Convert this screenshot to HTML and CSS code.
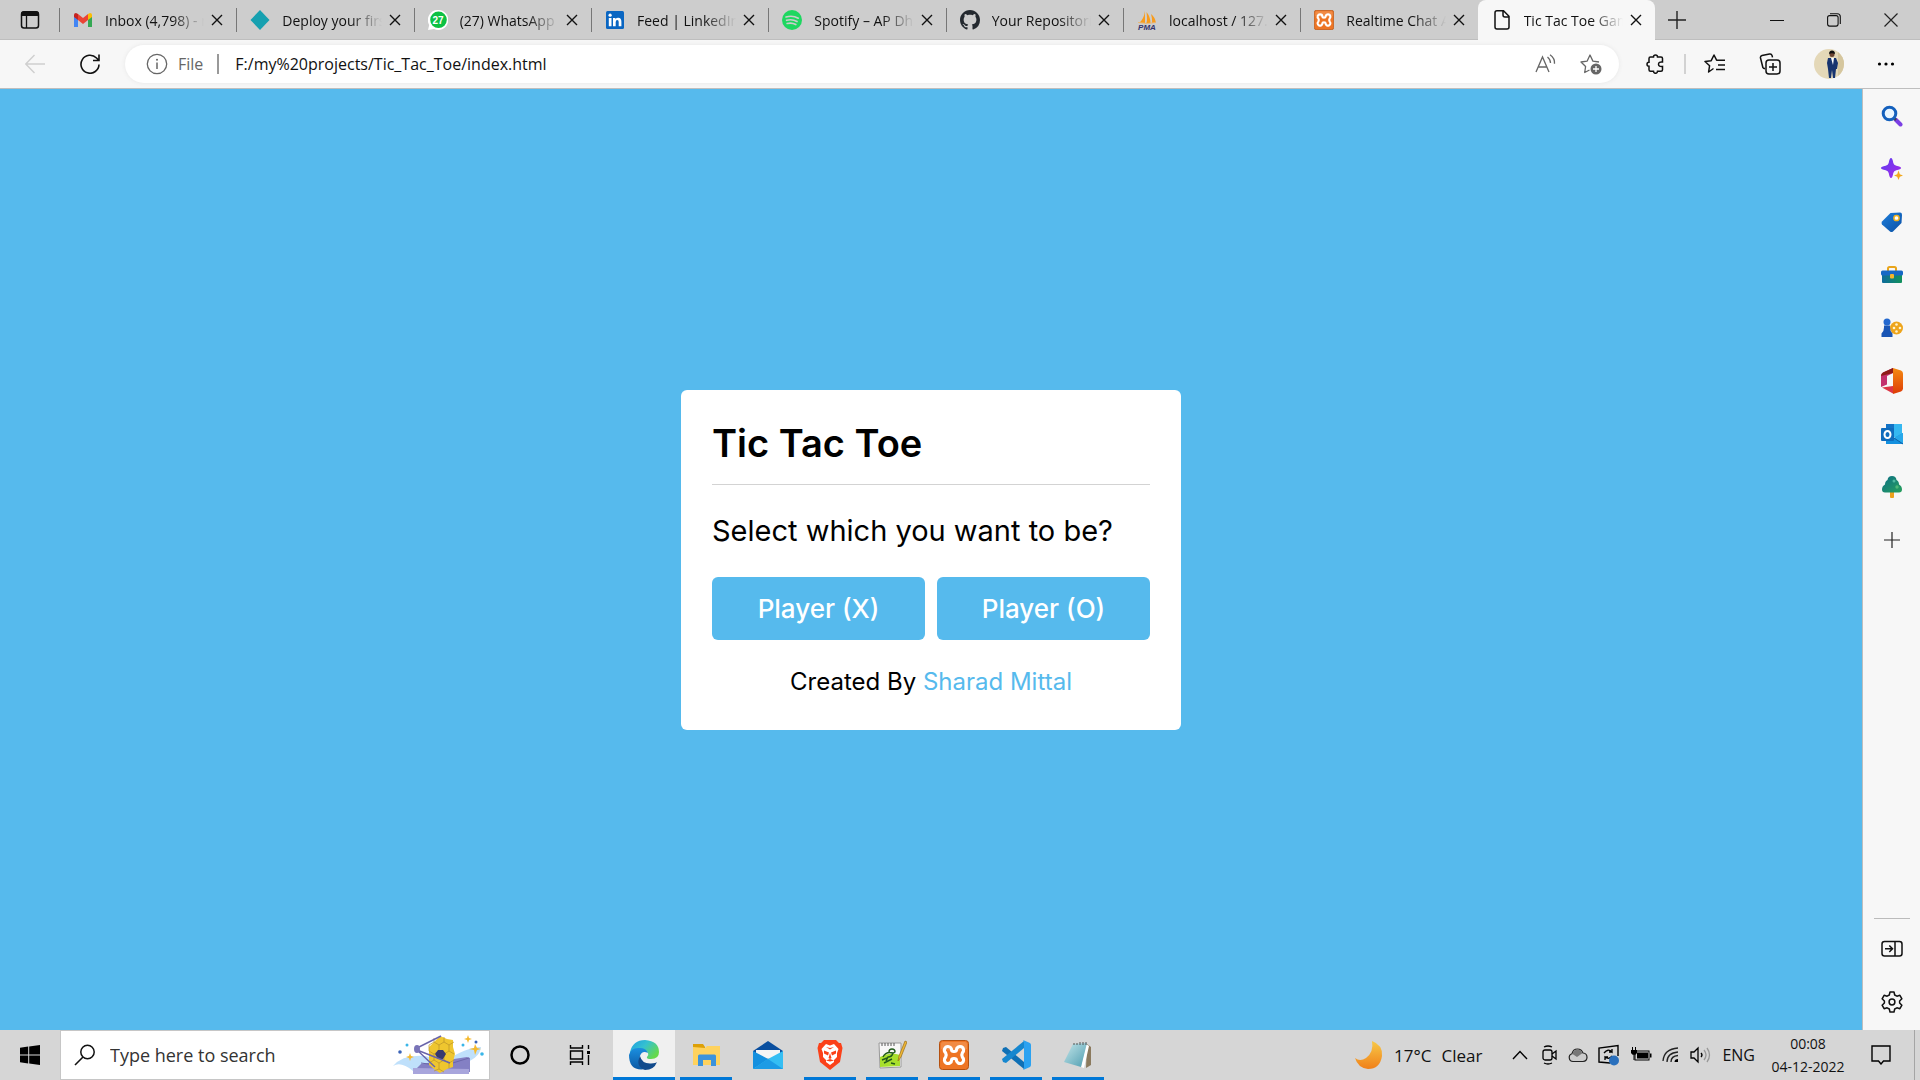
FILE: index.html
```html
<!DOCTYPE html>
<html lang="en">
<head>
<meta charset="utf-8">
<title>Tic Tac Toe Game</title>
<link rel="stylesheet" href="styles.css">
</head>
<body>
<svg class="defs" aria-hidden="true">
  <defs>
    <symbol id="x" viewBox="0 0 12 12"><path d="M1 1l10 10M11 1L1 11" stroke="#111" stroke-width="1.4" fill="none"/></symbol>
    <symbol id="xampp" viewBox="0 0 30 30">
      <rect x=".5" y=".5" width="29" height="29" rx="3" fill="#ee7524" stroke="#b4500f"/>
      <path d="M2 9V4q0-2 2-2h22q2 0 2 2v5q-13 4-26 0z" fill="#f39a5b" opacity=".6"/>
      <path d="M9 6.500a3.600 3.600 0 0 1 3.600 3.600q0 1.400 2.400 1.400t2.400-1.400a3.600 3.600 0 1 1 6 2.700q-1.200 2.200 0 4.400a3.600 3.600 0 1 1-6 2.700q0-1.400-2.400-1.400t-2.400 1.400a3.600 3.600 0 1 1-6-2.700q1.200-2.200 0-4.400A3.600 3.600 0 0 1 9 6.500z" fill="none" stroke="#fff" stroke-width="3.200"/>
    </symbol>
    <linearGradient id="gEdgeA" x1="0" y1="0" x2="1" y2=".6"><stop offset="0" stop-color="#1b9de2"/><stop offset=".5" stop-color="#35c1d0"/><stop offset="1" stop-color="#66d94b"/></linearGradient>
    <linearGradient id="gEdgeB" x1="0" y1="0" x2="0" y2="1"><stop offset="0" stop-color="#1b8fe0"/><stop offset="1" stop-color="#0c59a4"/></linearGradient>
    <linearGradient id="gMoon" x1="0" y1="0" x2="0" y2="1"><stop offset="0" stop-color="#f7c948"/><stop offset="1" stop-color="#f08019"/></linearGradient>
    <linearGradient id="gTag" x1="0" y1="0" x2="1" y2="1"><stop offset="0" stop-color="#1d7fdc"/><stop offset="1" stop-color="#0b4fa3"/></linearGradient>
    <linearGradient id="gSpark" x1="0" y1="0" x2="1" y2="1"><stop offset="0" stop-color="#5b3df0"/><stop offset="1" stop-color="#a82be8"/></linearGradient>
    <linearGradient id="gBox" x1="0" y1="0" x2="1" y2="0"><stop offset="0" stop-color="#0e6b9c"/><stop offset="1" stop-color="#12925c"/></linearGradient>
    <linearGradient id="gOffice" x1="0" y1="0" x2="0" y2="1"><stop offset="0" stop-color="#f58b12"/><stop offset="1" stop-color="#dd3b06"/></linearGradient>
    <linearGradient id="gTree" x1="0" y1="0" x2="1" y2="1"><stop offset="0" stop-color="#0c6f86"/><stop offset="1" stop-color="#28a05c"/></linearGradient>
    <linearGradient id="gNote" x1="0" y1="0" x2="1" y2="1"><stop offset="0" stop-color="#c5e6ea"/><stop offset="1" stop-color="#4e9db0"/></linearGradient>
  </defs>
</svg>

<header class="browser">
  <div class="tabbar">
    <button class="tab-actions" aria-label="Tab actions"><svg width="20" height="20" viewBox="0 0 20 20"><rect x="1.500" y="2" width="17" height="16" rx="2.500" fill="none" stroke="#111" stroke-width="1.500"/><path d="M1 6V4q0-3 3-3h12q3 0 3 3v2z" fill="#111"/><path d="M6.500 6v12" stroke="#111" stroke-width="1.300"/></svg></button>
    <nav class="tabs" aria-label="Open tabs">
      <div class="tab">
        <svg width="20" height="20" viewBox="0 0 20 20"><path d="M1 5v12h4V8z" fill="#4285f4"/><path d="M19 5v12h-4V8z" fill="#34a853"/><path d="M1 5q0-2 2-2l2 1v6L1 7z" fill="#c5221f"/><path d="M19 5q0-2-2-2l-2 1v6l4-3z" fill="#fbbc04"/><path d="M5 4l5 4 5-4v6l-5 4-5-4z" fill="#ea4335"/></svg>
        <a href="#">Inbox (4,798) - mail</a><button aria-label="Close tab"><svg width="12" height="12"><use href="#x"/></svg></button>
      </div>
      <div class="tab">
        <svg width="20" height="20" viewBox="0 0 20 20"><path d="M10 0l9.500 10L10 20 .5 10z" fill="#16a0b0"/></svg>
        <a href="#">Deploy your first</a><button aria-label="Close tab"><svg width="12" height="12"><use href="#x"/></svg></button>
      </div>
      <div class="tab">
        <svg width="20" height="20" viewBox="0 0 20 20"><path d="M10 0a10 10 0 1 1-4 19L0 20l1.200-5A10 10 0 0 1 10 0z" fill="#fff"/><circle cx="10.500" cy="9.800" r="8.300" fill="#0cc143"/><text x="10" y="14" text-anchor="middle" class="wa">27</text></svg>
        <a href="#">(27) WhatsApp</a><button aria-label="Close tab"><svg width="12" height="12"><use href="#x"/></svg></button>
      </div>
      <div class="tab">
        <svg width="20" height="20" viewBox="0 0 20 20"><rect x="1" y="1" width="18" height="18" rx="1.500" fill="#0a66c2"/><circle cx="5.100" cy="5.200" r="1.600" fill="#fff"/><path d="M3.800 8h2.700v8.300H3.800zM8 8h2.500v1.200q.8-1.400 2.700-1.400 3.200 0 3.200 3.900v4.600h-2.700v-4.200q0-2-1.400-2-1.600 0-1.600 2.100v4.100H8z" fill="#fff"/></svg>
        <a href="#">Feed | LinkedIn</a><button aria-label="Close tab"><svg width="12" height="12"><use href="#x"/></svg></button>
      </div>
      <div class="tab">
        <svg width="20" height="20" viewBox="0 0 20 20"><circle cx="10" cy="10" r="10" fill="#1ed760"/><path d="M4 7q6.500-2 12.300 1.200M4.600 10.300q5.600-1.500 10.400 1.200M5.200 13.500q4.700-1.200 8.600 1" stroke="#cdcdcd" stroke-width="1.700" fill="none" stroke-linecap="round"/></svg>
        <a href="#">Spotify – AP Dhillon</a><button aria-label="Close tab"><svg width="12" height="12"><use href="#x"/></svg></button>
      </div>
      <div class="tab">
        <svg width="20" height="20" viewBox="0 0 16 16"><path d="M8 0C3.580 0 0 3.580 0 8c0 3.540 2.290 6.530 5.470 7.590.4.070.55-.17.55-.38 0-.19-.01-.82-.01-1.490-2.010.37-2.530-.49-2.690-.94-.09-.23-.48-.94-.82-1.130-.28-.15-.68-.52-.01-.53.63-.01 1.080.58 1.230.82.72 1.210 1.870.87 2.330.66.07-.52.28-.87.51-1.070-1.780-.2-3.640-.89-3.640-3.950 0-.87.31-1.590.82-2.150-.08-.2-.36-1.020.08-2.120 0 0 .67-.21 2.200.82.64-.18 1.320-.27 2-.27s1.360.09 2 .27c1.530-1.040 2.200-.82 2.200-.82.44 1.100.16 1.920.08 2.120.51.56.82 1.270.82 2.150 0 3.070-1.870 3.750-3.650 3.950.29.25.54.73.54 1.480 0 1.070-.01 1.930-.01 2.200 0 .21.15.46.55.38A8.010 8.010 0 0 0 16 8c0-4.420-3.580-8-8-8z" fill="#24292f"/></svg>
        <a href="#">Your Repositories</a><button aria-label="Close tab"><svg width="12" height="12"><use href="#x"/></svg></button>
      </div>
      <div class="tab">
        <svg width="20" height="20" viewBox="0 0 20 20"><path d="M8 1v12H2q5-4 6-12zM9.500 2q1 8 0 11h4q0-6-4-11zM14 4q1.500 6 1 9h4q-1-6-5-9z" fill="#f89c1d"/><path d="M1 12.500q9 2 18 0" stroke="#e8b878" fill="none"/><text x="10" y="20" text-anchor="middle" class="pma">PMA</text></svg>
        <a href="#">localhost / 127.0.0.1</a><button aria-label="Close tab"><svg width="12" height="12"><use href="#x"/></svg></button>
      </div>
      <div class="tab">
        <svg width="20" height="20"><use href="#xampp"/></svg>
        <a href="#">Realtime Chat App</a><button aria-label="Close tab"><svg width="12" height="12"><use href="#x"/></svg></button>
      </div>
      <div class="tab active">
        <svg width="20" height="20" viewBox="0 0 20 20"><path d="M5 .8h6.500L17 6.300V17q0 2-2 2H5q-2 0-2-2V2.800q0-2 2-2zM11 1v4q0 2 2 2h4" fill="none" stroke="#111" stroke-width="1.500"/></svg>
        <a href="#" aria-current="page">Tic Tac Toe Game</a><button aria-label="Close tab"><svg width="12" height="12"><use href="#x"/></svg></button>
      </div>
    </nav>
    <div class="window-area">
      <button aria-label="New tab"><svg width="18" height="18" viewBox="0 0 18 18"><path d="M9 0v18M0 9h18" stroke="#222" stroke-width="1.400"/></svg></button>
      <div class="window-buttons">
        <button aria-label="Minimize"><svg width="14" height="14" viewBox="0 0 14 14"><path d="M0 7.500h14" stroke="#111"/></svg></button>
        <button aria-label="Restore"><svg width="14" height="14" viewBox="0 0 14 14"><rect x=".6" y="2.600" width="10.500" height="10.500" rx="2" fill="none" stroke="#111" stroke-width="1.100"/><path d="M3 .7h7.300q3 0 3 3V11" fill="none" stroke="#111" stroke-width="1.100"/></svg></button>
        <button aria-label="Close window"><svg width="14" height="14" viewBox="0 0 14 14"><path d="M.5.5l13 13M13.500.5l-13 13" stroke="#222" stroke-width="1.200"/></svg></button>
      </div>
    </div>
  </div>
  <div class="toolbar">
    <div class="nav-buttons">
      <button aria-label="Back"><svg width="20" height="20" viewBox="0 0 20 20"><path d="M20 10H1M9.500 1L.8 10l8.700 9" fill="none" stroke="#cfcfcf" stroke-width="1.400"/></svg></button>
      <button aria-label="Refresh"><svg width="20" height="20" viewBox="0 0 20 20"><path d="M19 10.500A9 9 0 1 1 16.500 4L19 6.500M19 .5v6h-6" fill="none" stroke="#111" stroke-width="1.600"/></svg></button>
    </div>
    <form class="address">
      <svg width="22" height="22" viewBox="0 0 22 22"><circle cx="11" cy="11" r="9.700" fill="none" stroke="#666" stroke-width="1.300"/><path d="M11 9.500V16" stroke="#666" stroke-width="1.500"/><circle cx="11" cy="6.700" r="1" fill="#666"/></svg>
      <label for="url">File</label>
      <span class="rule"></span>
      <input id="url" type="text" value="F:/my%20projects/Tic_Tac_Toe/index.html">
      <button type="button" aria-label="Read aloud"><svg width="22" height="20" viewBox="0 0 22 20"><path d="M1 18L7.500 3 14 18M3.500 13h8M12.500 3q3 2.500 3 6M15 .8q5 3.500 4.500 9" fill="none" stroke="#666" stroke-width="1.300"/></svg></button>
      <button type="button" aria-label="Add to favorites"><svg width="22" height="22" viewBox="0 0 22 22"><path d="M9.500 17l-4.800 2.500.9-6L1 9l6.200-.9L10 2l2.900 6.100L19 9" fill="none" stroke="#666" stroke-width="1.300" stroke-linejoin="round"/><circle cx="16" cy="16" r="5.500" fill="#666"/><path d="M16 13v6M13 16h6" stroke="#fff" stroke-width="1.300"/></svg></button>
    </form>
    <div class="tools">
      <button aria-label="Extensions"><svg width="20" height="20" viewBox="0 0 20 20"><path d="M5.500 3h3a2 2 0 0 1 4 0H16q1.500 0 1.500 1.500V8q-4-.5-4 2.200t4 2.200v3.400q0 1.500-1.500 1.500h-3.500a2 2 0 0 1-4 0h-3Q4 17.300 4 15.800v-3.600a2 2 0 0 1 0-4V4.500Q4 3 5.500 3z" fill="none" stroke="#111" stroke-width="1.500"/></svg></button>
      <span class="rule light"></span>
      <button aria-label="Favorites"><svg width="22" height="20" viewBox="0 0 22 20"><path d="M9.500 14.500L4.600 18l1-6.300L1 7.500l6.200-.8L10 1l2.600 5.200H21M14 11h7M12 15.500h9" fill="none" stroke="#111" stroke-width="1.500" stroke-linejoin="round"/></svg></button>
      <button aria-label="Collections"><svg width="22" height="22" viewBox="0 0 22 22"><path d="M4 15L1.500 5q-.4-2 1.500-2.500L10.500 1q2-.4 2.600 1.600l.4 1.800M4 15l2 .8" fill="none" stroke="#111" stroke-width="1.500"/><rect x="7" y="7" width="14" height="14" rx="3" fill="#f7f7f7" stroke="#111" stroke-width="1.500"/><path d="M14 10v8M10 14h8" stroke="#111" stroke-width="1.500"/></svg></button>
      <button aria-label="Profile"><svg width="30" height="30" viewBox="0 0 30 30"><circle cx="15" cy="15" r="15" fill="#e4d8b8"/><path d="M24 3a15 15 0 0 1 0 24z" fill="#d5c69e"/><path d="M14 9h8l2 5-1 6h-1l-1 9h-2l-1-8-1 8h-2l-1-9-1-6z" fill="#17346f"/><path d="M17 9h3l-1 7z" fill="#fff"/><circle cx="18" cy="5.500" r="2.500" fill="#6b4431"/><path d="M15 5q0-3.500 3-3.500T21 5q-3-1.500-6 0z" fill="#111"/></svg></button>
      <button aria-label="Settings and more"><svg width="18" height="6" viewBox="0 0 18 6"><circle cx="2.500" cy="3" r="1.600"/><circle cx="9" cy="3" r="1.600"/><circle cx="15.500" cy="3" r="1.600"/></svg></button>
    </div>
  </div>
</header>

<div class="body-area">
  <main class="page">
    <section class="card">
      <h1>Tic Tac Toe</h1>
      <p class="question">Select which you want to be?</p>
      <div class="choices"><button>Player (X)</button><button>Player (O)</button></div>
      <p class="credit">Created By <a href="#">Sharad Mittal</a></p>
    </section>
  </main>
  <aside class="sidebar">
    <div class="apps">
      <button aria-label="Search"><svg width="22" height="22" viewBox="0 0 22 22"><path d="M14.500 14.500l5 5" stroke="#7b3fe4" stroke-width="4" stroke-linecap="round"/><path d="M12.500 12.500l2.500 2.500" stroke="#444" stroke-width="2.500"/><circle cx="8.500" cy="8.500" r="6.300" fill="#eaf6ff" stroke="#1460bd" stroke-width="3"/></svg></button>
      <button aria-label="Discover"><svg width="22" height="22" viewBox="0 0 22 22"><path d="M10 0q1.500 0 2.300 5 .5 2.300 3 2.800Q20 8.500 20 10t-4.700 2.200q-2.500.5-3 2.800Q11.500 20 10 20t-2.300-5q-.5-2.300-3-2.800Q0 11.500 0 10t4.700-2.200q2.500-.5 3-2.800Q8.500 0 10 0z" fill="url(#gSpark)"/><path d="M17.500 12.500l1.300 3.700 3.200 1.300-3.200 1.300-1.300 3.200-1.300-3.200-3.200-1.300 3.200-1.300z" fill="#f2a81d"/></svg></button>
      <button aria-label="Shopping"><svg width="22" height="22" viewBox="0 0 22 22"><path d="M9.500 2L19 1.500q2 0 2 2L20.500 12l-8.500 8.500q-1.500 1-3 0L1 13.500q-1-1.500 0-3z" fill="url(#gTag)"/><circle cx="15.500" cy="7" r="2.600" fill="#fff" stroke="#f2b21d" stroke-width="1.500"/></svg></button>
      <button aria-label="Tools"><svg width="22" height="22" viewBox="0 0 22 22"><path d="M7 7V4.500q0-1.500 1.500-1.500h5Q15 3 15 4.500V7" fill="none" stroke="#e9a51b" stroke-width="2"/><rect x="1" y="10" width="20" height="9" rx="1" fill="url(#gBox)"/><rect x="0" y="6.500" width="22" height="5" rx="1.500" fill="#1668c5"/><rect x="9" y="10" width="4" height="4.500" rx="1" fill="#f4b52c"/></svg></button>
      <button aria-label="Games"><svg width="22" height="22" viewBox="0 0 22 22"><circle cx="15.500" cy="11" r="6.500" fill="#eea51c"/><g fill="#fff3cf"><circle cx="15.500" cy="7.500" r="1.300"/><circle cx="15.500" cy="14.500" r="1.300"/><circle cx="19" cy="11" r="1.300"/><circle cx="13" cy="11" r="1.300"/></g><circle cx="6" cy="5" r="3.500" fill="#2368cf"/><path d="M3 8.500h6v2q0 4 2.500 6V20h-11v-3.500q2.500-2 2.500-6z" fill="#1955b5"/></svg></button>
      <button aria-label="Microsoft 365"><svg width="22" height="26" viewBox="0 0 22 26"><path d="M12 0l-10 4.500Q0 5.500 0 8v11l6-2.500V8l6-3z" fill="#c3306d"/><path d="M12 0L2 4.500Q0 5.500 0 8l12-3z" fill="#8e1c18"/><path d="M1 19.500l11-1.500v7.500z" fill="#dc3545"/><path d="M12 0l8 2.500q2 1 2 3v15q0 2-2 3l-8 2.500z" fill="url(#gOffice)"/></svg></button>
      <button aria-label="Outlook"><svg width="22" height="22" viewBox="0 0 22 22"><rect x="5" y="1" width="16" height="13" fill="#35b8f1"/><path d="M5 1h8v6H5z" fill="#1373c6"/><path d="M5 10l8 5 9-5v11H5z" fill="#1490df"/><path d="M13 15l9-5v11z" fill="#28a8ea"/><path d="M13 15l9 6" stroke="#0f5fa6"/><rect x="0" y="5" width="13" height="13" rx="1" fill="#0f6cbd"/><ellipse cx="6.500" cy="11.500" rx="3" ry="3.500" fill="none" stroke="#fff" stroke-width="2"/></svg></button>
      <button aria-label="Drop"><svg width="22" height="22" viewBox="0 0 22 22"><rect x="9" y="14" width="4" height="8" rx="1" fill="#eda11d"/><path d="M11 0q4 0 4.500 4 2.500 1 2.500 4.500Q21 10 21 13.500q0 3-3 3H4q-3 0-3-3Q1 10 4 8.500 4 5 6.500 4 7 0 11 0z" fill="url(#gTree)"/><circle cx="13" cy="5" r="1.500" fill="#4fb8a0"/><circle cx="16" cy="11" r="1.700" fill="#4fb878"/></svg></button>
      <button aria-label="Customize"><svg width="16" height="16" viewBox="0 0 16 16"><path d="M8 0v16M0 8h16" stroke="#222" stroke-width="1.200"/></svg></button>
    </div>
    <div class="apps lower">
      <button aria-label="Hide sidebar"><svg width="22" height="18" viewBox="0 0 22 18"><rect x="1" y="1.500" width="20" height="14.500" rx="2.500" fill="none" stroke="#111" stroke-width="1.500"/><path d="M14 2v14M4 8.800h7M8.300 5.500l3.200 3.300-3.200 3.300" fill="none" stroke="#111" stroke-width="1.500"/></svg></button>
      <button aria-label="Settings"><svg width="22" height="22" viewBox="0 0 22 22"><path d="M9 1h4l.7 3 2.200 1.200 3-.9 2 3.500L18.600 10v2l2.300 2.200-2 3.500-3-.9L13.700 18 13 21H9l-.7-3-2.200-1.200-3 .9-2-3.500L3.400 12v-2L1.100 7.800l2-3.500 3 .9L8.300 4z" fill="none" stroke="#111" stroke-width="1.500" stroke-linejoin="round"/><circle cx="11" cy="11" r="2.900" fill="none" stroke="#111" stroke-width="1.500"/></svg></button>
    </div>
  </aside>
</div>

<footer class="taskbar">
  <button class="start" aria-label="Start"><svg width="20" height="20" viewBox="0 0 20 20"><path d="M0 2.800l8.200-1.200v7.900H0zM9.200 1.400L20 0v9.500H9.200zM0 10.500h8.200v7.900L0 17.200zM9.200 10.500H20V20L9.200 18.600z"/></svg></button>
  <form class="search">
    <label for="q" aria-label="Search"><svg width="22" height="22" viewBox="0 0 22 22"><circle cx="13.500" cy="8" r="6.700" fill="none" stroke="#111" stroke-width="1.500"/><path d="M9 13L1 21" stroke="#111" stroke-width="1.600"/></svg></label>
    <input id="q" type="text" placeholder="Type here to search">
    <svg width="92" height="44" viewBox="0 0 92 44">
      <path d="M0 33q10-12 32-10l20 5q22-14 36-14-1 12-22 18L20 38Q8 28 0 33z" fill="#bfe0fb"/>
      <path d="M28 31l46-7 3 1v14H20z" fill="#8480c4"/><path d="M20 35l56 1v5H20z" fill="#a8a5dc"/><path d="M28 30l22 3 26-8" fill="none" stroke="#6b67ab"/>
      <path d="M47 3l7 3 6 1v7l2 7-2 8v5l-6 2-7 4-6-4-5-4V14z" fill="#efc62f"/>
      <g fill="none" stroke="#b8922a" stroke-width=".7"><path d="M36 12l5-3 5 3 5-3 5 3 5-3M36 12v6l5 3 5-3 5 3 5-3 5 3M46 12v6M56 12v6M41 21v6l-5 3M41 27l5 3 5-3v-6M51 27l5 3 5-3M46 30v6l5 3M56 30v5M46 36l-5 2M41 9V5M51 9V4"/></g>
      <path d="M45 17h5l3 4-3 5h-5l-3-5z" fill="#38396f"/><path d="M24 15L48 3M24 17l18 17M24 17l33 13" stroke="#6964aa" stroke-width="1.400" fill="none"/><ellipse cx="24" cy="16" rx="3" ry="4" fill="#7974b8"/>
      <g fill="#f5b92c"><path d="M75 2l1 3 3 1-3 1-1 3-1-3-3-1 3-1zM82 11l2 4 4 1-4 1-2 5-1-5-5-1 5-1zM17 20l1 3 3 1-3 1-1 3-1-3-3-1 3-1z"/></g>
      <circle cx="7" cy="19" r="1.800" fill="#3a63b8"/><circle cx="83" cy="9" r="1.500" fill="#3a63b8"/><circle cx="14" cy="12" r="1.500" fill="#3ab6e8"/><circle cx="89" cy="21" r="1.800" fill="#3ab6e8"/><circle cx="70" cy="12" r="1.500" fill="#3ab6e8"/>
    </svg>
  </form>
  <div class="system">
    <button aria-label="Cortana"><svg width="20" height="20" viewBox="0 0 20 20"><circle cx="10" cy="10" r="8.500" fill="none" stroke="#000" stroke-width="2.500"/></svg></button>
    <button aria-label="Task view"><svg width="22" height="20" viewBox="0 0 22 20"><path d="M1.500 0v3h12V0M1.500 20v-3h12v3M1.500 6h12v8h-12zM19.500 0v4M19.500 10v10" fill="none" stroke="#000" stroke-width="1.400"/><path d="M18 6h3v3h-3z"/></svg></button>
  </div>
  <div class="running">
    <button class="open current" aria-label="Microsoft Edge"><svg width="30" height="30" viewBox="0 0 30 30"><path d="M1 12Q4 0 16 0q14 1 14 12 0 7-8 7-5 0-4-2 2-2 1-4-2-4-7-4Q4 9 1 16z" fill="url(#gEdgeA)"/><path d="M0 15Q2 7 11 8q6 0 8 5-6-3-8 3-2 7 6 13Q0 32 0 15z" fill="url(#gEdgeB)"/><path d="M11 16q2 8 11 7.500 5-.5 6-1.500-3 8-12 8-10-4-5-14z" fill="#114a8c"/></svg></button>
    <button class="open" aria-label="File Explorer"><svg width="30" height="30" viewBox="0 0 30 30"><path d="M2 4h10l2 3v6H2z" fill="#dda007"/><path d="M2 7l12 1 2-2h13v19H2z" fill="#fed25e"/><path d="M7 26V16q0-1.500 1.500-1.500h15Q25 14.500 25 16v10h-5v-6h-8v6z" fill="#3c93db"/></svg></button>
    <button aria-label="Mail"><svg width="30" height="30" viewBox="0 0 30 30"><path d="M0 11L15 1l15 10v4H0z" fill="#0a4f9f"/><path d="M3 10h24v8H3z" fill="#f5f5f5"/><path d="M0 11l17 9L0 29z" fill="#1490df"/><path d="M30 11L15 19 0 29h30z" fill="#35bef3"/><path d="M15 19l15 10H0z" fill="#1d9be5"/></svg></button>
    <button class="open" aria-label="Brave"><svg width="30" height="30" viewBox="0 0 30 30"><path d="M9 0h12l3 3h2l1.500 5L25 22l-10 8L5 22 2.500 8 4 3h2z" fill="#fb4119"/><path d="M15 5.500l4-1.500 4.500 5-1.500 4 0 4-3 3 0 2-4 3-4-3 0-2-3-3 0-4-1.500-4L11 4z" fill="#fff"/><path d="M9 10.500l5 2-1 3-4-2zM21 10.500l-5 2 1 3 4-2zM15 13l1.500 5-1.500 1-1.500-1zM11 20.500l4-1.500 4 1.500-4 1zM11 7l4 1 4-1-4 2.500z" fill="#fb4119"/></svg></button>
    <button class="open" aria-label="Notepad++"><svg width="30" height="30" viewBox="0 0 30 30"><path d="M2 3h22v24L3 28z" fill="#f7f7f7" stroke="#999"/><path d="M3 17q10-6 20-2v11L3 27z" fill="#a8e02c"/><path d="M5 3v3M8 3v3M11 3v3M14 3v3M17 3v3" stroke="#555"/><path d="M6 17q3-6 10-4-1 4-5 4l-2 4M7 23l8-4M12 12q0-3 3-3t3 3l-3 2M5 20l5-2M14 23l4 1" fill="none" stroke="#225b1b" stroke-width="1.400"/><path d="M28 1l2 1-6 15-3 4 1-5z" fill="#f0b735" stroke="#986d19" stroke-width=".7"/></svg></button>
    <button class="open" aria-label="XAMPP"><svg width="30" height="30"><use href="#xampp"/></svg></button>
    <button class="open" aria-label="Visual Studio Code"><svg width="30" height="30" viewBox="0 0 30 30"><path d="M2 8l3-1 18 15v7L1 11z" fill="#0f70b5"/><path d="M2 22l3 1L23 8V1L1 19z" fill="#1687cf"/><path d="M22 0l7 3q1 1 1 2v20q0 1-1 2l-7 3q1-1 1-3V3q0-2-1-3z" fill="#2ba2f1"/></svg></button>
    <button class="open" aria-label="Notepad"><svg width="30" height="30" viewBox="0 0 30 30"><path d="M24 4l4 3v18l-5 3z" fill="#8b7a5e"/><path d="M23 4l3 2-5 22-3-1z" fill="#fff"/><path d="M10 4l14-1-6 24L1 22z" fill="url(#gNote)"/><path d="M11 3v2M14 3v2M17 2v3M20 2v3M23 2v3" stroke="#555"/></svg></button>
  </div>
  <div class="tray">
    <button class="weather"><svg width="30" height="30" viewBox="0 0 30 30"><path d="M18 1q11 4 10 15-2 13-14 13Q4 28 1 18q5 4 11 0 8-6 6-17z" fill="url(#gMoon)"/></svg><span>17°C</span><span>Clear</span></button>
    <div class="status">
      <button class="more" aria-label="Show hidden icons"><svg width="16" height="10" viewBox="0 0 16 10"><path d="M1 9l7-7.500L15 9" fill="none" stroke="#000" stroke-width="1.400"/></svg></button>
      <button aria-label="Meet now"><svg width="16" height="20" viewBox="0 0 16 20"><rect x="1" y="5" width="9" height="10" rx="2" fill="none" stroke="#000" stroke-width="1.300"/><path d="M10 9l4-3v8l-4-3M2 2q4-2 8 0M2 18q4 2 8 0" fill="none" stroke="#000" stroke-width="1.300"/></svg></button>
      <button aria-label="OneDrive"><svg width="20" height="16" viewBox="0 0 20 16"><path d="M5 14.500a4 4 0 0 1-1-7.800Q5 2 9.500 2q4 0 5.500 4 4 .3 4 4.300t-4 4.200z" fill="#ccc" stroke="#222" stroke-width="1.200"/><path d="M4.500 7Q5 3 9.500 2.500q3.500.3 4.800 3.700L9 10z" fill="#777"/></svg></button>
      <button aria-label="Windows Update"><svg width="22" height="22" viewBox="0 0 22 22"><path d="M12 19L1 18V4l19-2.500V12" fill="none" stroke="#000" stroke-width="1.400"/><path d="M6 9q4-5 8-1V5M14 8h-3M14 12q-3 4-7 1v3M7 13h3" fill="none" stroke="#000" stroke-width="1.300"/><circle cx="16" cy="16.500" r="5" fill="#2a70bd"/></svg></button>
      <button aria-label="Battery"><svg width="22" height="16" viewBox="0 0 22 16"><rect x="5" y="4" width="14" height="9" fill="none" stroke="#000"/><path d="M7 5.500h11v6H7zM20 6.500h1.500v4H20zM1 3h6v3q-1 2-3 2T1 6zM2 0h1v3H2zM5 0h1v3H5zM3.500 7h1v6h-1z"/></svg></button>
      <button aria-label="Wi-Fi"><svg width="18" height="18" viewBox="0 0 18 18"><path d="M1 15Q2 3 16 2M5 16q0-9 11-10M9 16q0-6 7-6.500" fill="none" stroke="#222" stroke-width="1.300"/><path d="M12.500 16q0-3 3.500-3v3z"/></svg></button>
      <button aria-label="Volume"><svg width="22" height="18" viewBox="0 0 22 18"><path d="M1 6h3l4-4v14l-4-4H1zM11 7q2 2 0 4" fill="none" stroke="#000" stroke-width="1.300"/><path d="M14 4q4 5 0 10M17 2q5 7 0 14" fill="none" stroke="#999" stroke-width="1.300"/></svg></button>
      <button>ENG</button>
    </div>
    <button class="clock"><time>00:08</time><time>04-12-2022</time></button>
    <button class="notes" aria-label="Notifications"><svg width="20" height="20" viewBox="0 0 20 20"><path d="M1 1h18v15h-6.500L10 19l-2.500-3H1z" fill="none" stroke="#000" stroke-width="1.400"/></svg></button>
  </div>
</footer>
</body>
</html>
```

FILE: styles.css
```css
* { box-sizing: border-box; }

body {
  margin: 0;
  min-height: 100vh;
  display: flex;
  flex-direction: column;
  font-family: "Open Sans", "Noto Sans", sans-serif;
  color: #111;
}

.defs { position: absolute; width: 0; height: 0; }
svg { display: block; flex: none; }
text { font-family: "Liberation Sans", Arial, sans-serif; font-weight: bold; }
.wa { font-size: 10px; fill: #fff; }
.pma { font-size: 8px; font-style: italic; fill: #33336b; }

button {
  display: flex;
  align-items: center;
  justify-content: center;
  margin: 0;
  padding: 0;
  border: 0;
  background: none;
  color: inherit;
  font: inherit;
}

input {
  flex: 1;
  min-width: 0;
  padding: 0;
  border: 0;
  outline: 0;
  background: none;
  color: #111;
  font: inherit;
}

a { text-decoration: none; color: inherit; }

/* Tab strip */
.tabbar {
  display: flex;
  height: 40px;
  background: #cdcdcd;
  box-shadow: inset 0 -1px #bebebe;
}
.tab-actions { width: 59px; }
.tabs {
  flex: 1;
  display: grid;
  grid-template-columns: repeat(9, minmax(0, 1fr));
}
.tab {
  display: flex;
  align-items: center;
  gap: 12px;
  padding: 0 12px 0 14px;
  font-size: 14px;
  background: linear-gradient(#777, #777) left center / 1px 24px no-repeat;
}
.tab a {
  flex: 1;
  margin-right: -6px;
  overflow: hidden;
  white-space: nowrap;
  mask-image: linear-gradient(to right, #000 calc(100% - 32px), transparent);
}
.tab button { width: 14px; height: 20px; }
.tab.active {
  background: #f7f7f7;
  border-radius: 8px 8px 0 0;
}
.window-area {
  display: flex;
  justify-content: space-between;
  width: 265px;
  padding: 0 1px 0 13px;
}
.window-buttons { display: flex; }
.window-buttons button { width: 57px; }

/* Toolbar */
.toolbar {
  display: flex;
  align-items: center;
  height: 49px;
  background: #f7f7f7;
  border-bottom: 1px solid #bebebe;
}
.nav-buttons { display: flex; gap: 35px; width: 125px; padding-left: 25px; }
.address {
  flex: 1;
  display: flex;
  align-items: center;
  height: 38px;
  padding: 0 17px 0 21px;
  border-radius: 19px;
  background: #fff;
  box-shadow: 0 0 4px #e6e6e6;
  font-size: 16px;
}
.address label { margin-left: 10px; color: #666; }
.address input { margin-left: 16px; }
.address button { margin-left: 23px; }
.rule { width: 2px; height: 20px; margin-left: 14px; background: #999; }
.rule.light { margin: 0 -15px 0 19px; background: #d2d2d2; }
.tools {
  display: flex;
  align-items: center;
  width: 301px;
  padding-left: 26px;
}
.tools button + button,
.tools .rule + button { margin-left: 33px; }

/* Page and sidebar */
.body-area { flex: 1; display: flex; }
.page {
  flex: 1;
  display: flex;
  align-items: center;
  justify-content: center;
  background: #56baed;
  font-family: Inter, "Open Sans", sans-serif;
  color: #000;
}
.card {
  width: 500px;
  padding: 30px 31px;
  border-radius: 6px;
  background: #fff;
}
.card h1 {
  margin: 0;
  padding-bottom: 18px;
  border-bottom: 1px solid #d3d3d3;
  font-size: 38px;
  line-height: 46px;
  font-weight: 600;
}
.question { margin: 28px 0; font-size: 29px; line-height: 36px; }
.choices { display: grid; grid-template-columns: 1fr 1fr; gap: 12px; }
.choices button {
  height: 63px;
  border-radius: 6px;
  background: #56baed;
  color: #fff;
  font-size: 26px;
  font-weight: 500;
}
.credit {
  margin: 26px 0 0;
  padding-bottom: 2px;
  font-size: 24px;
  line-height: 32px;
  text-align: center;
}
.credit a { color: #56baed; }

.sidebar {
  display: flex;
  flex-direction: column;
  justify-content: space-between;
  width: 58px;
  border-left: 1px solid #bebebe;
  background: #f7f7f7;
}
.apps { display: flex; flex-direction: column; align-items: center; }
.apps button { width: 44px; height: 53px; }
.lower { padding-bottom: 2px; }
.lower::before { content: ""; width: 36px; height: 1px; margin-bottom: 3px; background: #bbb; }

/* Taskbar */
.taskbar { display: flex; height: 50px; background: #d6d6d6; }
.start { width: 60px; }
.search {
  display: flex;
  align-items: center;
  width: 430px;
  padding: 0 4px 0 13px;
  border: 1px solid #c6c6c6;
  background: #fff;
  font-size: 18px;
}
.search input { margin-left: 14px; }
.search input::placeholder { color: #333; opacity: 1; }
.system { display: flex; width: 123px; }
.system button { width: 60px; }
.running { display: flex; }
.running button { position: relative; width: 62px; }
.running .current { background: #f0f0f0; }
.running .open::after {
  content: "";
  position: absolute;
  inset: auto 5px 0;
  height: 3px;
  background: #0078d7;
}
.running .current::after { inset: auto 0 0; }
.tray {
  display: flex;
  align-items: stretch;
  margin-left: auto;
  margin-right: 5px;
  border-right: 1px solid #a5a5a5;
  font-size: 16px;
}
.weather { gap: 10px; margin-right: 30px; font-size: 17px; }
.status { display: flex; align-items: center; gap: 10px; padding-right: 13px; }
.more { margin-right: 4px; }
.clock { flex-direction: column; width: 80px; font-size: 14px; line-height: 23px; }
.notes { width: 66px; }
```
